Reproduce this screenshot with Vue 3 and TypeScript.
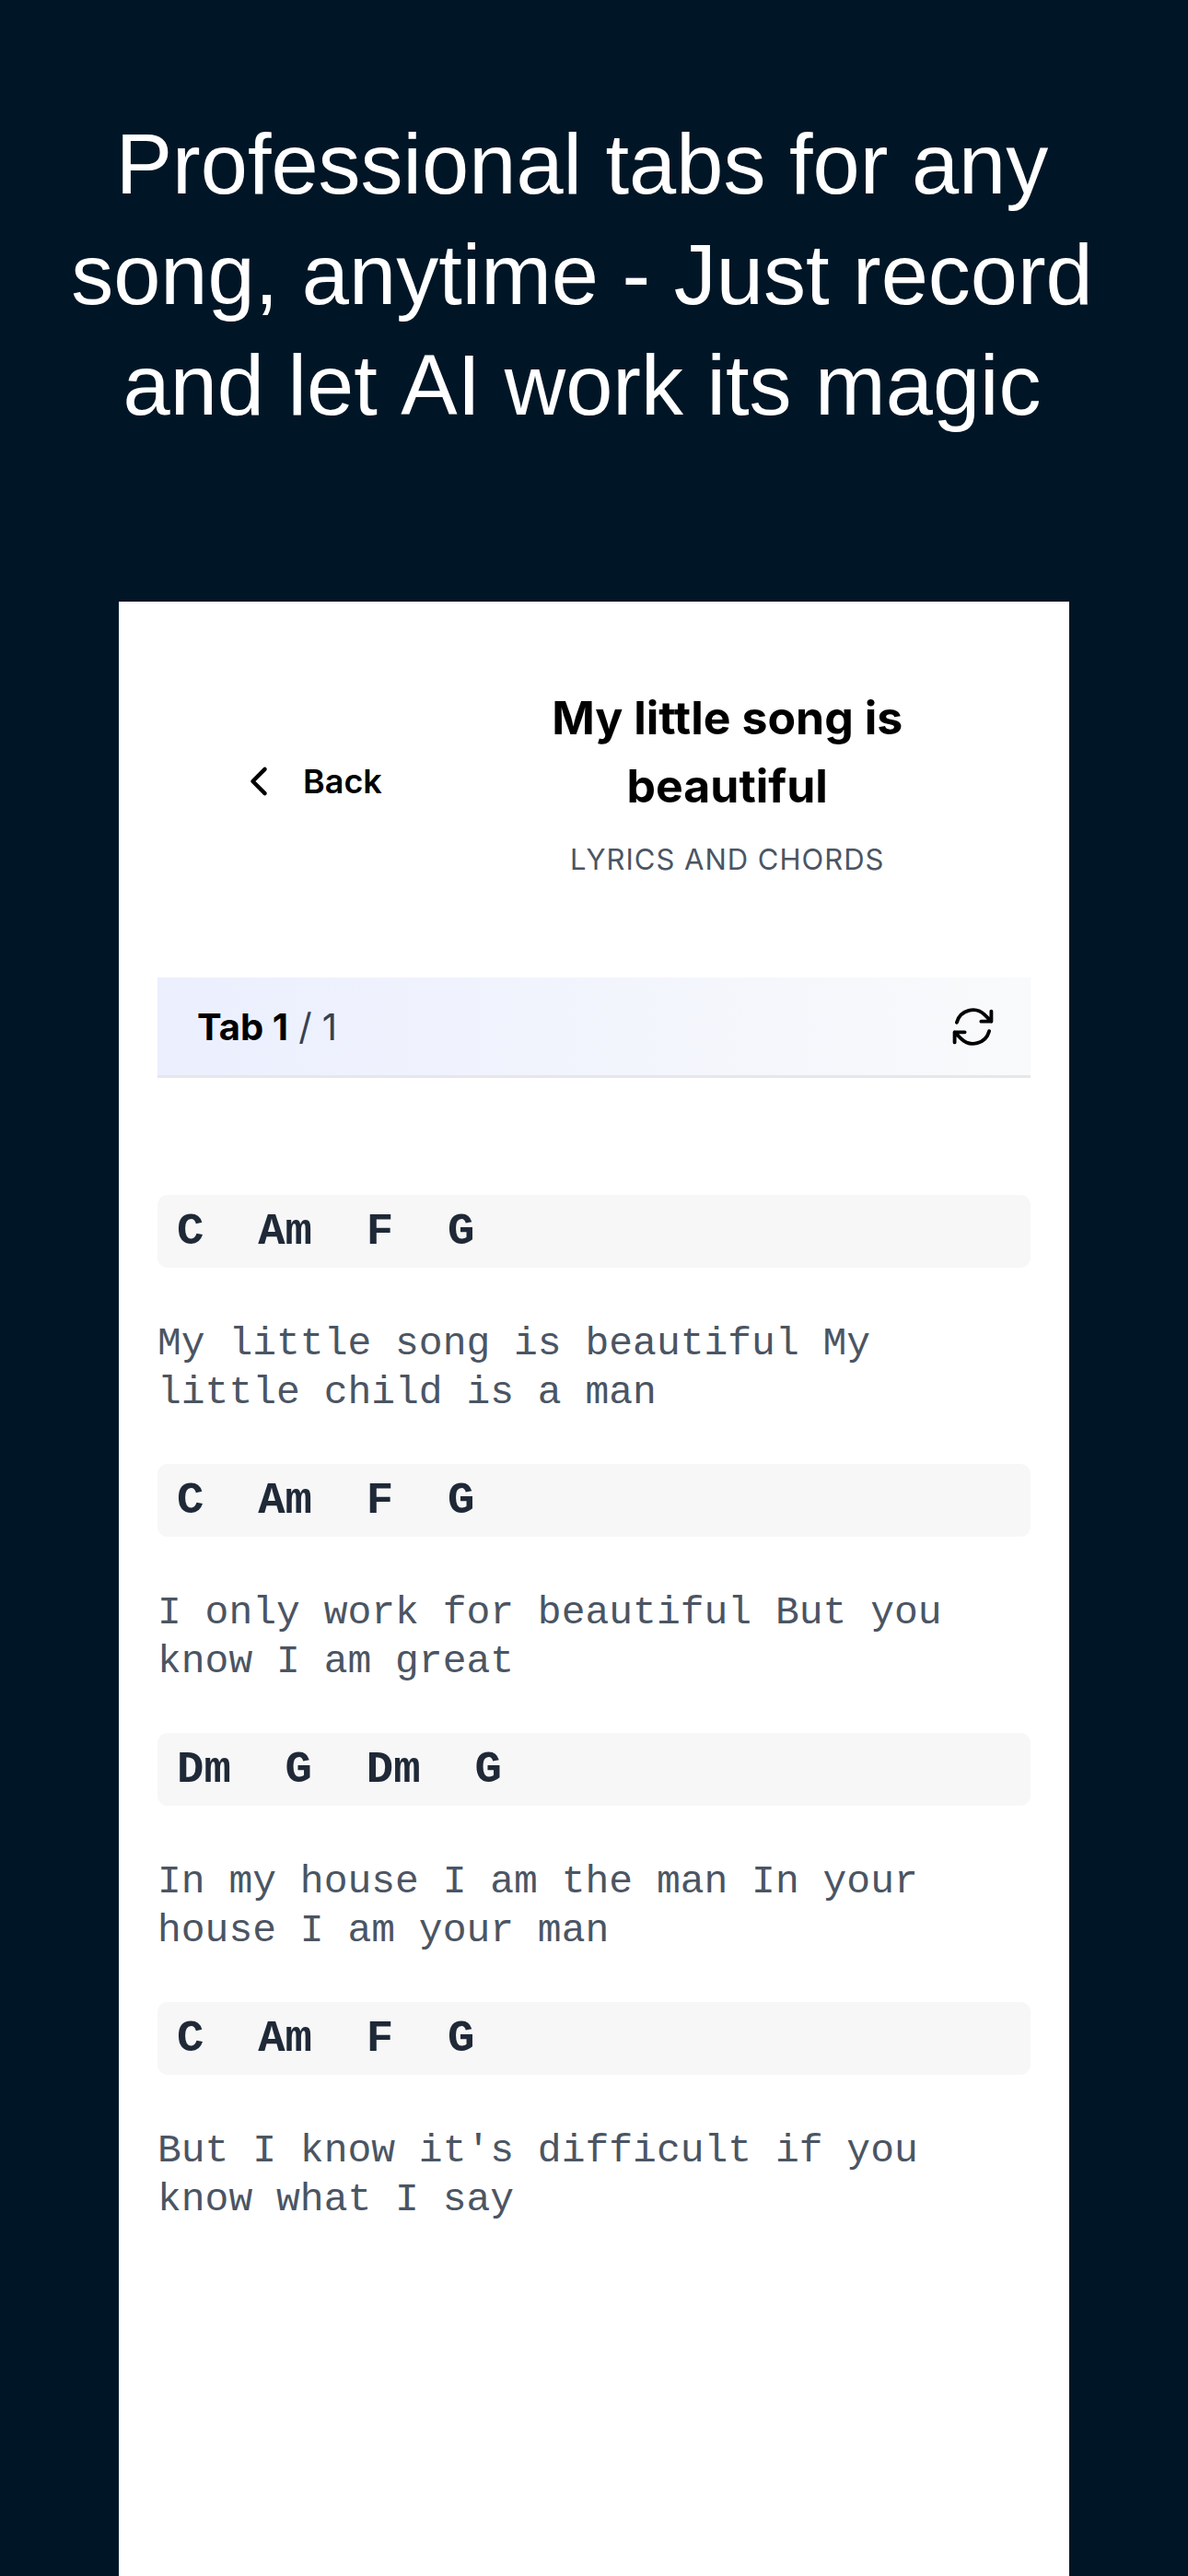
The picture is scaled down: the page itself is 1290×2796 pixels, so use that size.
<script setup lang="ts">
interface Verse {
  chords: string[]
  lyrics: string
}

const verses: Verse[] = [
  { chords: ['C', 'Am', 'F', 'G'], lyrics: 'My little song is beautiful My little child is a man' },
  { chords: ['C', 'Am', 'F', 'G'], lyrics: 'I only work for beautiful But you know I am great' },
  { chords: ['Dm', 'G', 'Dm', 'G'], lyrics: 'In my house I am the man In your house I am your man' },
  { chords: ['C', 'Am', 'F', 'G'], lyrics: "But I know it's difficult if you know what I say" },
]
</script>

<template>
  <main class="page">
    <h1 class="headline">Professional tabs for any song, anytime - Just record and let AI work its magic</h1>
    <section class="card">
      <header class="header">
        <button type="button" class="back">
          <svg class="back-icon" viewBox="0 0 24 24" aria-hidden="true">
            <path d="M15.75 19.5 8.25 12l7.5-7.5" />
          </svg>
          <span>Back</span>
        </button>
        <div class="heading">
          <h2 class="title">My little song is beautiful</h2>
          <p class="subtitle">LYRICS AND CHORDS</p>
        </div>
      </header>
      <div class="tab-bar">
        <p class="tab-label"><strong>Tab 1</strong> / 1</p>
        <button type="button" class="refresh" aria-label="Refresh">
          <svg class="refresh-icon" viewBox="0 0 24 24" aria-hidden="true">
            <path d="M16.023 9.348h4.992v-.001M2.985 19.644v-4.992m0 0h4.992m-4.993 0 3.181 3.183a8.25 8.25 0 0 0 13.803-3.7M4.031 9.865a8.25 8.25 0 0 1 13.803-3.7l3.181 3.182m0-4.991v4.99" />
          </svg>
        </button>
      </div>
      <div class="song">
        <article v-for="(verse, i) in verses" :key="i" class="verse">
          <div class="chords">{{ verse.chords.join('  ') }}</div>
          <p class="lyrics">{{ verse.lyrics }}</p>
        </article>
      </div>
    </section>
  </main>
</template>

<style>
body {
  margin: 0;
  background: #001626;
}
</style>

<style scoped>
.page {
  box-sizing: border-box;
  min-height: 100vh;
  display: flex;
  flex-direction: column;
  padding-top: 118px;
  background: #001626;
  font-family: Inter, "Liberation Sans", sans-serif;
}

h1,
h2,
p {
  margin: 0;
}

button {
  padding: 0;
  border: 0;
  background: none;
  color: inherit;
  font: inherit;
  cursor: pointer;
}

svg {
  display: block;
  fill: none;
  stroke: currentColor;
  stroke-linecap: round;
  stroke-linejoin: round;
}

.headline {
  padding: 0 86px 0 60px;
  color: #fff;
  font: 400 92px/120px "Liberation Sans", Arial, sans-serif;
  font-kerning: none;
  text-align: center;
}

.card {
  flex: 1;
  width: 80%;
  box-sizing: border-box;
  margin: 175px auto 0;
  padding: 89px 42px 42px;
  background: #fff;
  color: #000;
}

.header {
  display: grid;
  grid-template-columns: 37fr 50fr 8fr;
  align-items: center;
}

.back {
  display: flex;
  align-items: center;
  gap: 27px;
  padding-left: 89px;
  font-size: 36px;
  line-height: 53px;
  font-weight: 600;
}

.back-icon {
  width: 42px;
  height: 42px;
  stroke-width: 2.5;
}

.heading {
  display: flex;
  flex-direction: column;
  gap: 22px;
  text-align: center;
}

.title {
  font-size: 50px;
  line-height: 74px;
  font-weight: 700;
}

.subtitle {
  color: #4b5563;
  font-size: 31px;
  line-height: 42px;
  letter-spacing: 1px;
}

.tab-bar {
  display: flex;
  align-items: center;
  justify-content: space-between;
  height: 106px;
  margin-top: 107px;
  padding: 0 36px 0 43px;
  border-bottom: 3px solid #e5e7eb;
  background: linear-gradient(to right, #ebeffe, #f9fafb);
}

.tab-label {
  color: #374151;
  font-size: 40px;
  line-height: 53px;
}

.tab-label strong {
  color: #000;
  font-weight: 700;
}

.refresh-icon {
  width: 53px;
  height: 53px;
  stroke-width: 1.75;
}

.song {
  display: flex;
  flex-direction: column;
  gap: 51px;
  margin-top: 127px;
  font-family: "Liberation Mono", monospace;
}

.verse {
  display: flex;
  flex-direction: column;
  gap: 56px;
}

.chords {
  padding: 2px 21px 0;
  border-radius: 11px;
  background: #f7f7f7;
  color: #1f2937;
  font-size: 49px;
  line-height: 77px;
  font-weight: 700;
  white-space: pre;
}

.lyrics {
  color: #4b5563;
  font-size: 43px;
  line-height: 53px;
}
</style>
